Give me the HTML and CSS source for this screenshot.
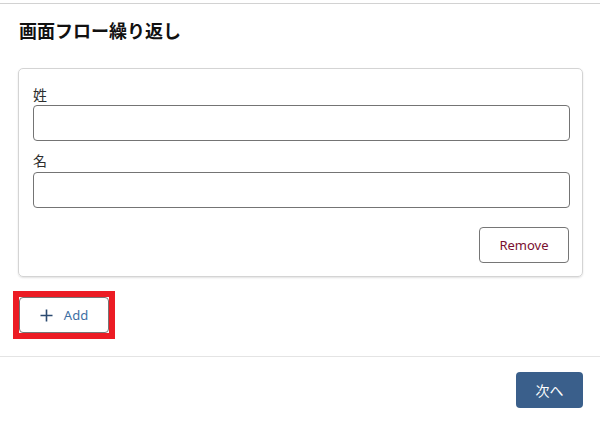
FILE: index.html
```html
<!DOCTYPE html>
<html lang="ja">
<head>
<meta charset="utf-8">
<link rel="stylesheet" href="styles.css">
</head>
<body>
<div class="frame">
  <h1 class="title">画面フロー繰り返し</h1>
  <div class="card">
    <label class="label">姓</label>
    <div class="input"></div>
    <label class="label second">名</label>
    <div class="input"></div>
    <div class="actions">
      <button class="btn remove">Remove</button>
    </div>
  </div>
  <div class="addrow">
    <button class="btn add">
      <svg class="plus" width="13" height="13" viewBox="0 0 13 13"><path d="M6.5 0.5v12M0.5 6.5h12" stroke="#2b4a70" stroke-width="1.6" fill="none"/></svg>
      <span>Add</span>
    </button>
  </div>
  <div class="footer">
    <button class="btn next">次へ</button>
  </div>
</div>
</body>
</html>
```

FILE: styles.css
```css
html, body {
  margin: 0;
  padding: 0;
  background: #fff;
}
body {
  font-family: "Noto Sans", "Noto Sans CJK JP", sans-serif;
  color: #181818;
}
.frame {
  margin-top: 3px;
  border-top: 1px solid #d2d2d2;
  padding-top: 14px;
}
.title {
  margin: 0 0 26px 19px;
  font-size: 18px;
  line-height: 24px;
  font-weight: 700;
  font-family: "Noto Sans CJK JP", sans-serif;
  color: #111;
}
.card {
  margin: 0 17px 0 18px;
  border: 1px solid #d4d4d4;
  border-radius: 5px;
  box-shadow: 0 1px 2px rgba(0,0,0,0.12);
  padding: 16px 12px 13px 14px;
  display: flex;
  flex-direction: column;
}
.label {
  font-family: "Noto Sans CJK JP", sans-serif;
  font-size: 14px;
  line-height: 19px;
  color: #2e2e2e;
  margin-bottom: 1px;
}
.label.second {
  margin-top: 10px;
  margin-bottom: 2px;
}
.input {
  height: 34px;
  border: 1px solid #747474;
  border-radius: 4px;
  background: #fff;
}
.actions {
  display: flex;
  justify-content: flex-end;
  margin-top: 19px;
}
.btn {
  font-family: "Noto Sans", "Noto Sans CJK JP", sans-serif;
  font-size: 13px;
  height: 36px;
  border-radius: 4px;
  background: #fff;
  border: 1px solid #767676;
  padding: 0;
  display: inline-flex;
  align-items: center;
  justify-content: center;
  cursor: pointer;
}
.remove {
  width: 90px;
  color: #7a1030;
  margin-right: 1px;
}
.addrow {
  padding: 20px 0 23px 19px;
  border-bottom: 1px solid #e4e4e4;
}
.add {
  position: relative;
  width: 90px;
  color: #3d6ea3;
  gap: 11px;
}
.add::after {
  content: "";
  position: absolute;
  top: -7px;
  left: -7px;
  right: -7px;
  bottom: -7px;
  border: 6px solid #ec1c24;
  pointer-events: none;
}
.add span {
  margin-top: -1px;
}
.footer {
  display: flex;
  justify-content: flex-end;
  padding: 15px 17px 0 0;
}
.next {
  width: 67px;
  background: #3a5f8b;
  border: none;
  color: #fff;
  font-family: "Noto Sans CJK JP", sans-serif;
  font-size: 14px;
}
```
